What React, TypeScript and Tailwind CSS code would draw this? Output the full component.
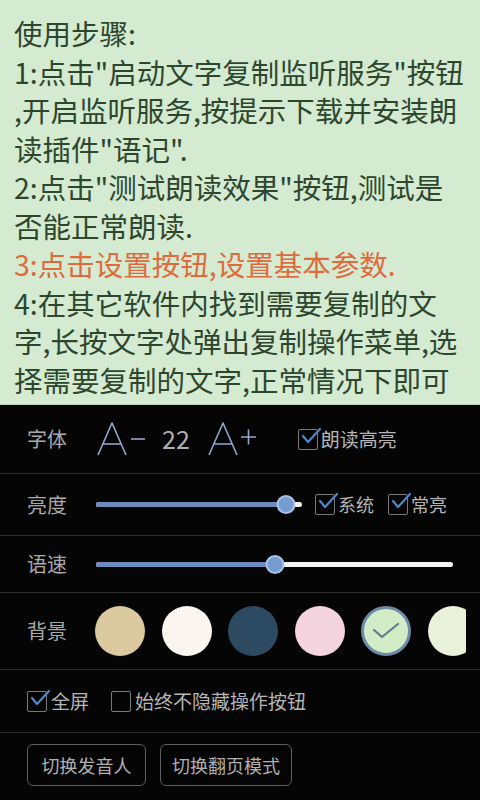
import React from "react";

const font = { fontFamily: '"Noto Sans CJK SC", "Noto Sans", sans-serif' };

function Check({ checked = true }: { checked?: boolean }) {
  return (
    <span className="relative inline-block w-[20px] h-[21px] shrink-0">
      <span className="absolute inset-0 border-[1.5px] border-[#7a7a7a] rounded-[2px]" />
      {checked && (
        <svg className="absolute left-[2px] top-[-3px]" width="22" height="22" viewBox="0 0 22 22">
          <path d="M3 10 L8 16 L20 3" fill="none" stroke="#4f88c8" strokeWidth="2.2" strokeLinecap="round" strokeLinejoin="round" />
        </svg>
      )}
    </span>
  );
}

function BigA({ sign }: { sign: "-" | "+" }) {
  return (
    <svg width="50" height="34" viewBox="0 0 50 34">
      <path d="M1 33 L15 1 L29 33 M6 22 L24 22" fill="none" stroke="#98a6cc" strokeWidth="1.6" strokeLinejoin="round" />
      {sign === "-" ? (
        <path d="M34 17 L48 17" stroke="#98a6cc" strokeWidth="1.6" />
      ) : (
        <path d="M33 15 L48 15 M40.5 7.5 L40.5 22.5" stroke="#98a6cc" strokeWidth="1.6" />
      )}
    </svg>
  );
}

function Slider({ pct }: { pct: number }) {
  return (
    <div className="relative flex-1 h-[20px] flex items-center">
      <div className="w-full h-[5px] rounded-full bg-[#f2f2f2] overflow-hidden">
        <div className="h-full bg-[#6b8cbd]" style={{ width: `${pct}%` }} />
      </div>
      <div
        className="absolute w-[19px] h-[19px] rounded-full bg-[#759dd0] border-2 border-[#a9c4e6] -translate-x-1/2"
        style={{ left: `${pct}%` }}
      />
    </div>
  );
}

const lines: { t: string; red?: boolean }[] = [
  { t: "使用步骤:" },
  { t: '1:点击"启动文字复制监听服务"按钮' },
  { t: ",开启监听服务,按提示下载并安装朗" },
  { t: '读插件"语记".' },
  { t: '2:点击"测试朗读效果"按钮,测试是' },
  { t: "否能正常朗读." },
  { t: "3:点击设置按钮,设置基本参数.", red: true },
  { t: "4:在其它软件内找到需要复制的文" },
  { t: "字,长按文字处弹出复制操作菜单,选" },
  { t: "择需要复制的文字,正常情况下即可" },
];

const colors = ["#dbcaa0", "#faf6ef", "#2c4a62", "#f3d3de", "#d3ecc8", "#e9f1da"];

export default function App() {
  return (
    <div className="w-[480px] h-[800px] overflow-hidden bg-[#050505]" style={font}>
      <div className="h-[405px] bg-[#d4ebd2] pt-[14px] pl-[14px] border-b border-[#bcd8bb]">
        {lines.map((l, i) => (
          <div
            key={i}
            className={`whitespace-nowrap text-[28.5px] leading-[38.5px] ${l.red ? "text-[#e06a3c]" : "text-[#2e462e]"}`}
          >
            {l.t}
          </div>
        ))}
      </div>

      <div className="text-[#a9a9a9]">
        {/* Row 1 */}
        <div className="h-[69px] flex items-center pl-[27px] border-b border-[#2c2c2c]">
          <span className="text-[20px] w-[70px]">字体</span>
          <BigA sign="-" />
          <span className="text-[25px] ml-[15px] text-[#b0b0b0]">22</span>
          <span className="ml-[18px]"><BigA sign="+" /></span>
          <span className="ml-[40px] flex items-center gap-[3px]">
            <Check />
            <span className="text-[19px] text-[#b5b5b5]">朗读高亮</span>
          </span>
        </div>
        {/* Row 2 */}
        <div className="h-[62px] flex items-center pl-[27px] pr-[27px] border-b border-[#2c2c2c]">
          <span className="text-[20px] w-[69px] shrink-0">亮度</span>
          <div className="w-[206px] flex"><Slider pct={92} /></div>
          <span className="ml-[13px] flex items-center gap-[3px]">
            <Check />
            <span className="text-[18px] text-[#b5b5b5]">系统</span>
          </span>
          <span className="ml-[14px] flex items-center gap-[3px]">
            <Check />
            <span className="text-[18px] text-[#b5b5b5]">常亮</span>
          </span>
        </div>
        {/* Row 3 */}
        <div className="h-[57px] flex items-center pl-[27px] pr-[27px] border-b border-[#2c2c2c]">
          <span className="text-[20px] w-[69px] shrink-0">语速</span>
          <Slider pct={50} />
        </div>
        {/* Row 4 */}
        <div className="h-[77px] flex items-center pl-[27px] border-b border-[#2c2c2c]">
          <span className="text-[20px] w-[68px] shrink-0">背景</span>
          <div className="w-[371px] overflow-hidden flex gap-[16.6px]">
            {colors.map((c, i) => (
              <div
                key={i}
                className={`w-[50px] h-[50px] rounded-full shrink-0 flex items-center justify-center ${i === 4 ? "border-[3px] border-[#6d8aa8]" : ""}`}
                style={{ backgroundColor: c }}
              >
                {i === 4 && (
                  <svg width="28" height="20" viewBox="0 0 28 20">
                    <path d="M2 9 L10 16 L26 3" fill="none" stroke="#5f7d84" strokeWidth="2.2" strokeLinecap="round" strokeLinejoin="round" />
                  </svg>
                )}
              </div>
            ))}
          </div>
        </div>
        {/* Row 5 */}
        <div className="h-[63px] flex items-center pl-[27px] border-b border-[#2c2c2c]">
          <span className="flex items-center gap-[4px]">
            <Check />
            <span className="text-[19px] text-[#b5b5b5]">全屏</span>
          </span>
          <span className="ml-[22px] flex items-center gap-[4px]">
            <Check checked={false} />
            <span className="text-[19px] text-[#b5b5b5]">始终不隐藏操作按钮</span>
          </span>
        </div>
        {/* Row 6 */}
        <div className="flex items-start pl-[27px] pt-[11px] gap-[14px]">
          <button className="w-[119px] h-[42px] border-[1.5px] border-[#5e5e5e] rounded-[6px] text-[18px] text-[#b0b0b0]">
            切换发音人
          </button>
          <button className="w-[132px] h-[42px] border-[1.5px] border-[#5e5e5e] rounded-[6px] text-[18px] text-[#b0b0b0]">
            切换翻页模式
          </button>
        </div>
      </div>
    </div>
  );
}
